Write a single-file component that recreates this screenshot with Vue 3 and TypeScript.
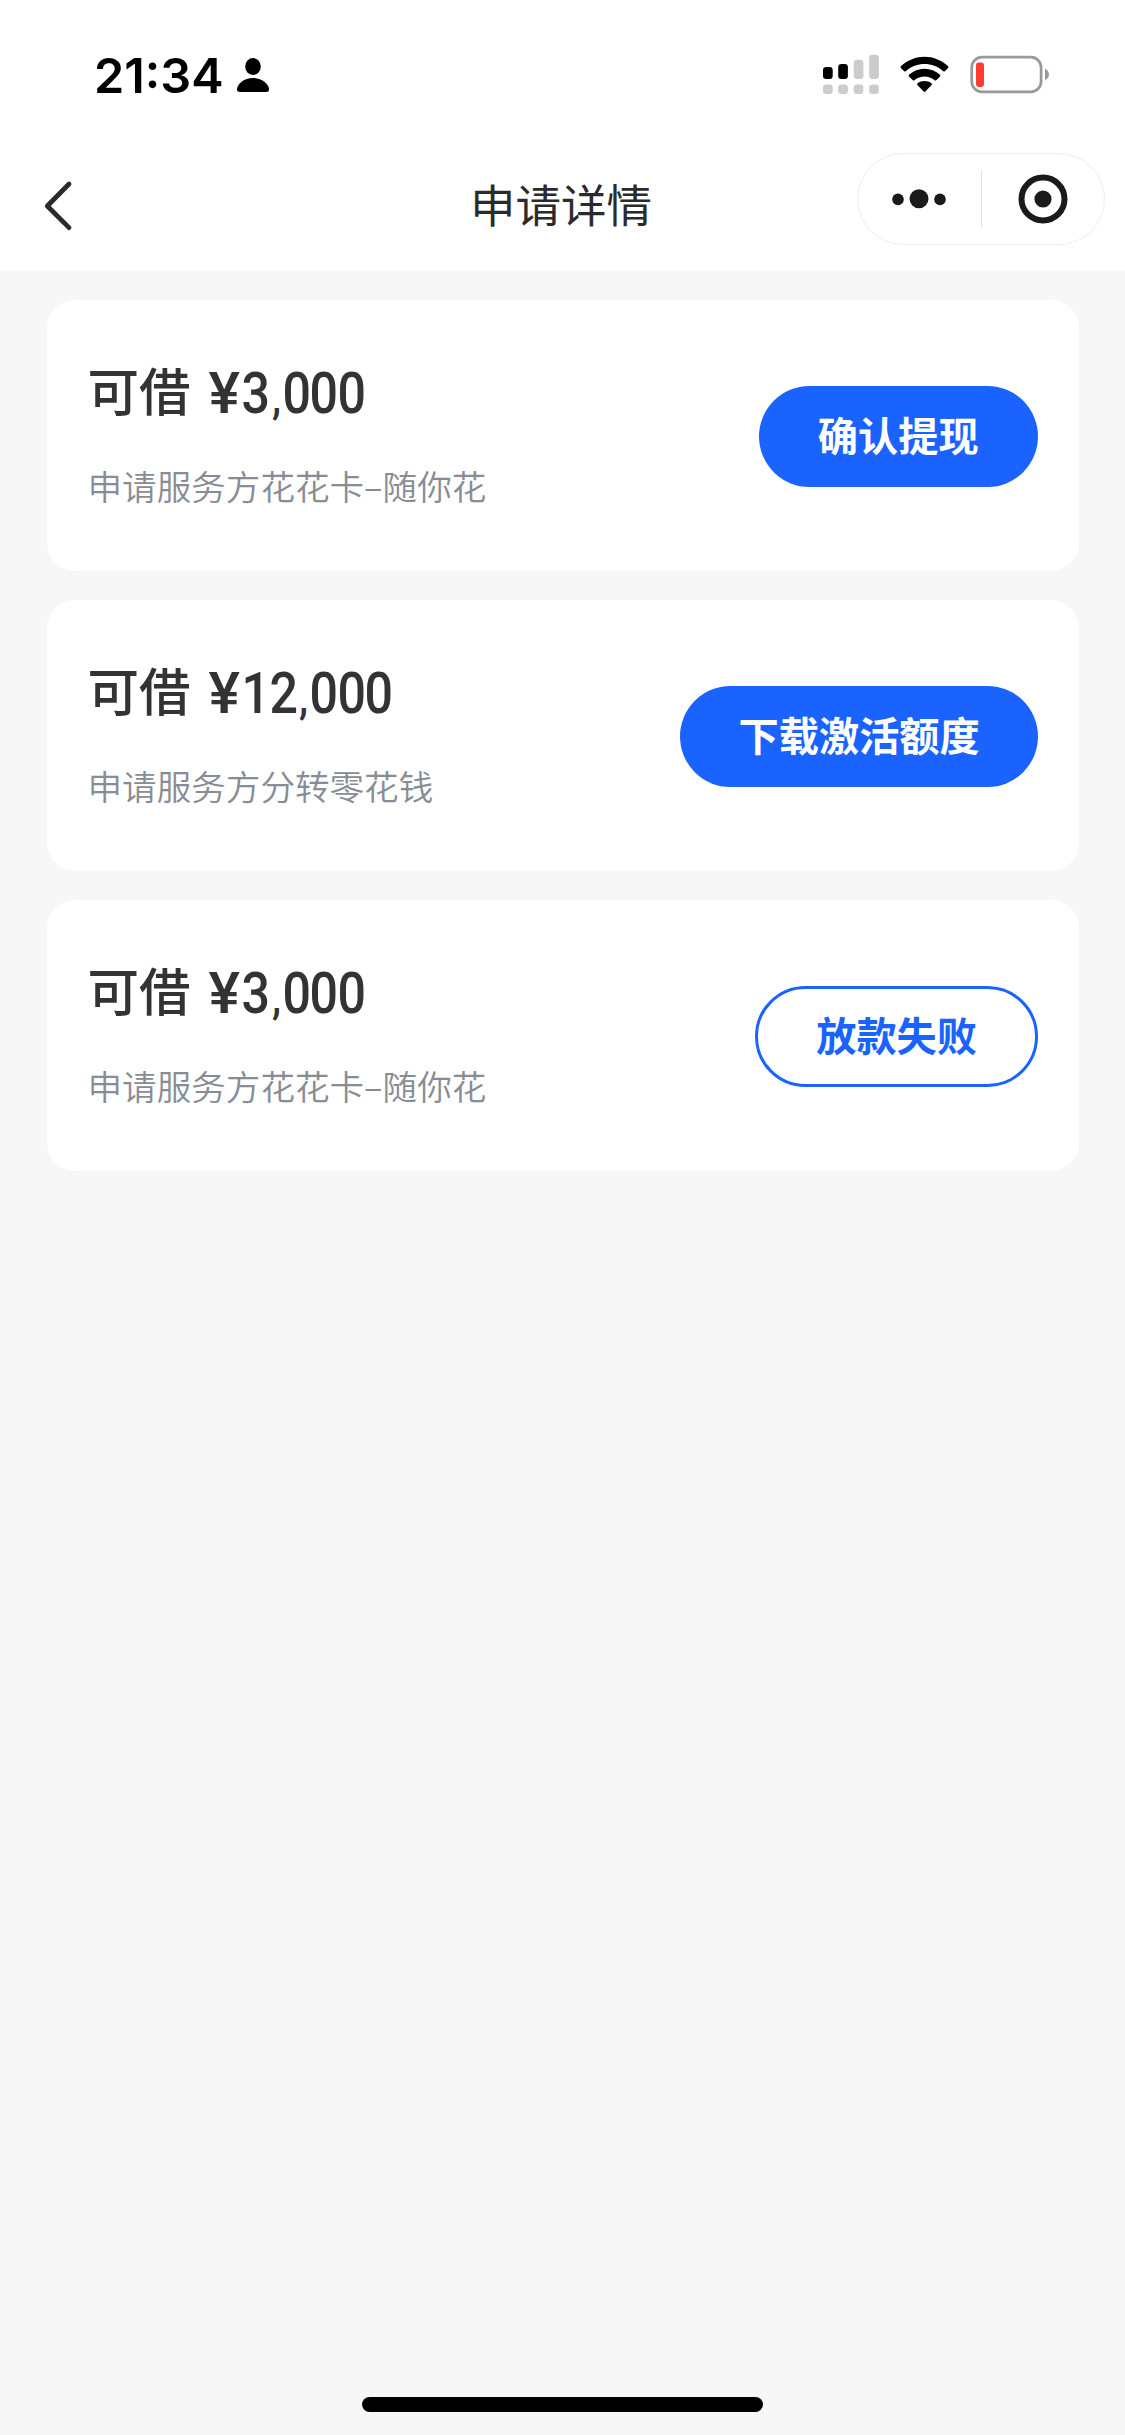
<script setup lang="ts">
interface LoanItem {
  id: number
  amount: string
  provider: string
  action: string
  outlined?: boolean
}

const loans: LoanItem[] = [
  { id: 1, amount: '3,000', provider: '花花卡–随你花', action: '确认提现' },
  { id: 2, amount: '12,000', provider: '分转零花钱', action: '下载激活额度' },
  { id: 3, amount: '3,000', provider: '花花卡–随你花', action: '放款失败', outlined: true },
]
</script>

<template>
  <div class="page">
    <header class="header">
      <div class="status-bar">
        <div class="status-left">
          <span class="time">21:34</span>
          <svg class="person" width="34" height="40" viewBox="0 0 34 40">
            <ellipse cx="17" cy="11.5" rx="7.8" ry="8.4" />
            <path d="M17 23C26 23 33 29 33 34.5Q33 37 30 37H4Q1 37 1 34.5C1 29 8 23 17 23Z" />
          </svg>
        </div>
        <svg class="indicators" width="230" height="44" viewBox="822 52 230 44">
          <g>
            <rect x="823" y="67" width="9.7" height="12" rx="3.2" />
            <rect x="838.2" y="64" width="9.7" height="15" rx="3.2" />
          </g>
          <g fill="#ccc">
            <rect x="853.7" y="59.7" width="9.7" height="19.3" rx="3.2" />
            <rect x="869.2" y="54.8" width="9.7" height="24.2" rx="3.2" />
            <rect x="823" y="84.6" width="9.7" height="9.4" rx="3.2" />
            <rect x="838.2" y="84.6" width="9.7" height="9.4" rx="3.2" />
            <rect x="853.7" y="84.6" width="9.7" height="9.4" rx="3.2" />
            <rect x="869.2" y="84.6" width="9.7" height="9.4" rx="3.2" />
          </g>
          <path d="M900.9 66.3C914.5 53.6 934.5 53.6 948.1 66.3Q948.9 67.1 948.1 67.9L944.8 71.2Q944 72 943.2 71.2C932.6 61.5 916.4 61.5 905.8 71.2Q905 72 904.2 71.2L900.9 67.9Q900.1 67.1 900.9 66.3Z" />
          <path d="M909 74.8C917.6 66.7 931.4 66.7 940 74.8Q940.8 75.6 940 76.4L936.2 80.2Q935.4 81 934.6 80.2C928.8 75.2 920.2 75.2 914.4 80.2Q913.6 81 912.8 80.2L909 76.4Q908.2 75.6 909 74.8Z" />
          <path d="M917.4 83.4C921.4 80.2 927.6 80.2 931.6 83.4Q932.4 84.1 931.6 84.9L925.4 91.5Q924.5 92.3 923.6 91.5L917.4 84.9Q916.6 84.1 917.4 83.4Z" />
          <rect x="971.7" y="57.2" width="69.4" height="34.6" rx="10.2" fill="none" stroke="#999" stroke-width="2.7" />
          <rect x="976" y="62.6" width="8" height="24.3" rx="2.8" fill="#ff3b30" />
          <path d="M1045 68.8C1050.3 71 1050.3 78 1045 80.2Z" fill="#999" />
        </svg>
      </div>
      <nav class="nav-bar">
        <svg class="back" width="32" height="54" viewBox="42 179 32 54">
          <path d="M69 184L47.3 206L69 227.6" fill="none" stroke="#2b2b2b" stroke-width="4.8" stroke-linecap="round" stroke-linejoin="round" />
        </svg>
        <h1 class="title">申请详情</h1>
        <div class="capsule">
          <svg class="more" width="56" height="22" viewBox="0 0 56 22">
            <circle cx="7" cy="11.4" r="5.8" />
            <circle cx="28" cy="10.8" r="9.5" />
            <circle cx="49" cy="11.4" r="5.8" />
          </svg>
          <i class="divider"></i>
          <svg class="target" width="50" height="50" viewBox="0 0 50 50">
            <circle cx="25" cy="25" r="21.5" fill="none" stroke="#1a1a1a" stroke-width="6" />
            <circle cx="25" cy="25" r="8.6" />
          </svg>
        </div>
      </nav>
    </header>

    <main class="list">
      <section v-for="loan in loans" :key="loan.id" class="card">
        <div class="info">
          <div class="amount">
            <span class="label">可借</span>
            <span class="money"><span class="yen">¥</span><span
              v-for="(ch, i) in loan.amount" :key="i" :class="ch === ',' ? 'comma' : 'digit'">{{ ch }}</span></span>
          </div>
          <p class="provider">申请服务方{{ loan.provider }}</p>
        </div>
        <button class="action" :class="{ outlined: loan.outlined }">{{ loan.action }}</button>
      </section>
    </main>

    <footer class="footer"><span class="home-indicator"></span></footer>
  </div>
</template>

<style>
body {
  margin: 0;
  background: #f7f7f7;
}
</style>

<style scoped>
.page {
  box-sizing: border-box;
  width: 1125px;
  height: 2435px;
  display: flex;
  flex-direction: column;
  overflow: hidden;
  background: #f7f7f7;
  font-family: "Noto Sans CJK SC", sans-serif;
  color: #333;
}
.header {
  height: 271px;
  flex: none;
  background: #fff;
}
.status-bar {
  height: 140px;
  box-sizing: border-box;
  padding: 52px 73px 0 94px;
  display: flex;
  justify-content: space-between;
  align-items: flex-start;
  color: #000;
}
.status-left {
  display: flex;
  align-items: flex-start;
}
.time {
  width: 142px;
  font: 600 48.6px/47px Inter, sans-serif;
  white-space: nowrap;
}
.person {
  margin-top: 3px;
}
.nav-bar {
  height: 131px;
  box-sizing: border-box;
  padding: 0 20px 0 42px;
  display: grid;
  grid-template-columns: 248px 1fr 248px;
  align-items: center;
}
.title {
  margin: 0 0 6px -25px;
  text-align: center;
  font-size: 45.5px;
  font-weight: 400;
  line-height: 64px;
  color: #2b2b2b;
}
.capsule {
  box-sizing: border-box;
  width: 248px;
  height: 92px;
  margin-bottom: 14px;
  border: 1.5px solid #efefef;
  border-radius: 46px;
  display: flex;
  align-items: center;
  fill: #1a1a1a;
}
.more {
  margin-left: 33px;
}
.divider {
  width: 1px;
  height: 57px;
  margin-left: 34px;
  background: #e2e2e2;
}
.target {
  margin-left: 35.8px;
}
.list {
  flex: 1;
  display: flex;
  flex-direction: column;
  gap: 29px;
  padding: 29px 46.5px 0;
}
.card {
  box-sizing: border-box;
  height: 271px;
  padding: 1px 40.5px 0 41px;
  display: flex;
  align-items: center;
  justify-content: space-between;
  border-radius: 28px;
  background: #fff;
}
.amount {
  display: flex;
  align-items: flex-start;
  height: 72px;
  white-space: nowrap;
}
.label {
  width: 118px;
  font-size: 51.5px;
  font-weight: 500;
  line-height: 55px;
}
.money {
  font-family: Roboto, sans-serif;
  font-size: 57px;
  font-weight: 500;
  line-height: 65px;
  display: flex;
  align-items: baseline;
}
.yen,
.digit,
.comma {
  display: flex;
  justify-content: center;
  width: 27.5px;
  transform: scaleX(0.88);
}
.yen {
  width: 36.5px;
  transform: scaleX(1.04);
}
.comma {
  width: 13px;
  font-size: 46px;
}
.provider {
  margin: 26px 0 0;
  font-size: 34.6px;
  font-weight: 350;
  line-height: 52px;
  color: #888c94;
  white-space: nowrap;
}
.action {
  box-sizing: border-box;
  min-width: 279.5px;
  height: 101px;
  margin: 0;
  padding: 0 58.3px 6px;
  border: 0;
  border-radius: 51px;
  background: #1a63ff;
  color: #fff;
  font-family: inherit;
  font-size: 40.2px;
  font-weight: 700;
  line-height: 95px;
  white-space: nowrap;
}
.outlined {
  padding: 0 58px 6px;
  border: 3px solid #1a63ff;
  background: #fff;
  color: #1a63ff;
  line-height: 89px;
}
.footer {
  flex: none;
  height: 38px;
  display: flex;
  justify-content: center;
  align-items: flex-start;
}
.home-indicator {
  width: 401px;
  height: 15px;
  border-radius: 8px;
  background: #000;
}
</style>
